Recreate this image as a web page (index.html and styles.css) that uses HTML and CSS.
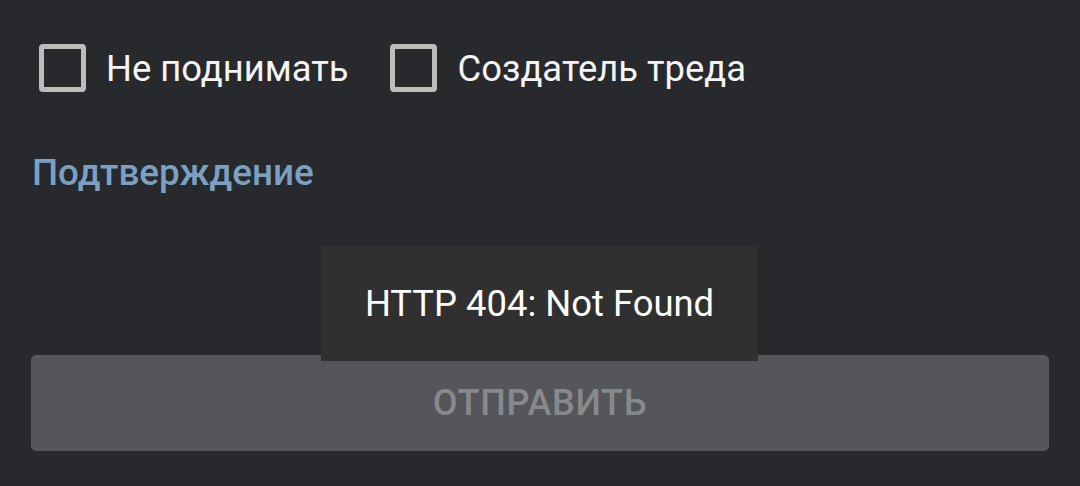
FILE: index.html
```html
<!DOCTYPE html>
<html lang="ru">
<head>
<meta charset="utf-8">
<link rel="stylesheet" href="styles.css">
</head>
<body>
<div class="page">
  <div class="options">
    <label class="check"><span class="box"></span><span class="label">Не поднимать</span></label>
    <label class="check"><span class="box"></span><span class="label">Создатель треда</span></label>
  </div>
  <div class="captcha-title">Подтверждение</div>
  <div class="submit-wrap">
    <button class="submit" disabled>Отправить</button>
  </div>
  <div class="toast">HTTP 404: Not Found</div>
</div>
</body>
</html>
```
FILE: styles.css
```css
html, body {
  margin: 0;
  padding: 0;
  background: #28292d;
  width: 1080px;
  height: 486px;
  overflow: hidden;
}
.page {
  position: relative;
  width: 1080px;
  height: 486px;
  font-family: Roboto, "Noto Sans", sans-serif;
  color: #ffffff;
}
.options {
  display: flex;
  gap: 42px;
  padding: 43px 0 0 39px;
}
.check {
  display: flex;
  align-items: center;
  gap: 20px;
}
.box {
  box-sizing: border-box;
  width: 47px;
  height: 48px;
  border: 5px solid #bdbdbd;
  border-radius: 4px;
}
.label {
  font-size: 36.4px;
  color: #f4f4f4;
  line-height: 48px;
  padding-top: 2px;
}
.captcha-title {
  margin: 56px 0 0 32px;
  font-size: 36.8px;
  font-weight: 500;
  color: #7ba0c2;
  line-height: 48px;
}
.submit-wrap {
  padding: 0 31px;
  margin-top: 158px;
}
.submit {
  display: block;
  width: 100%;
  height: 96px;
  border: none;
  border-radius: 5px;
  background: #55565a;
  color: #88898c;
  font-family: Roboto, "Noto Sans", sans-serif;
  font-size: 36px;
  font-weight: 500;
  text-transform: uppercase;
  letter-spacing: 0.7px;
}
.toast {
  position: absolute;
  left: 321px;
  top: 246px;
  width: 437px;
  height: 115px;
  background: #303030;
  display: flex;
  align-items: center;
  justify-content: center;
  font-size: 36.4px;
  color: #ffffff;
}
```
